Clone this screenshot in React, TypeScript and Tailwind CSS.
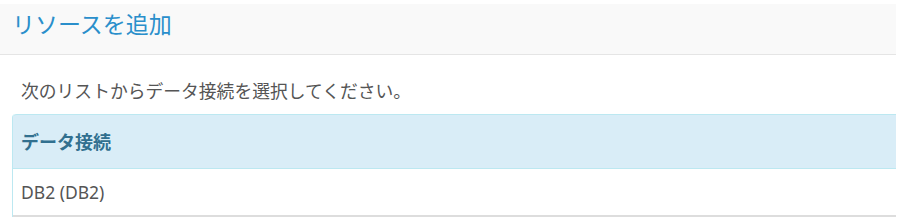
import React from "react";

export default function App() {
  return (
    <div
      className="w-[896px] bg-white"
      style={{ fontFamily: '"Noto Sans", "Noto Sans CJK JP", sans-serif' }}
    >
      <div className="mt-[4px] h-[51px] bg-[#f9f9f9] border-b border-[#e5e5e5] flex items-center pl-[12px] pb-[11px]">
        <h1 className="text-[23px] leading-none text-[#2a8fcb] font-normal" style={{ fontFamily: '"Noto Sans CJK JP", sans-serif' }}>
          リソースを追加
        </h1>
      </div>
      <div className="pl-[12px]">
        <p className="mt-[23px] h-[24px] pl-[9px] text-[17.8px] leading-[24px] text-[#555]" style={{ fontFamily: '"Noto Sans CJK JP", sans-serif' }}>
          次のリストからデータ接続を選択してください。
        </p>
        <div className="mt-[12px] border-l border-[#bce8f1] rounded-tl-[4px]">
          <div className="h-[55px] bg-[#d9edf7] border-t border-b border-[#bce8f1] rounded-tl-[4px] flex items-center pl-[8px]">
            <span className="text-[18px] font-bold text-[#31708f]" style={{ fontFamily: '"Noto Sans CJK JP", sans-serif' }}>
              データ接続
            </span>
          </div>
          <div className="h-[48px] bg-white border-b-2 border-[#dddddd] flex items-center pl-[8px]">
            <span className="text-[17.5px] text-[#555]">DB2 (DB2)</span>
          </div>
        </div>
      </div>
    </div>
  );
}
